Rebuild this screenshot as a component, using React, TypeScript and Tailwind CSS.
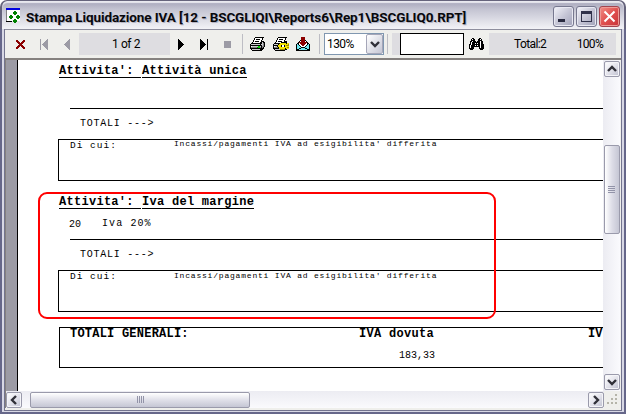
import React from "react";

const PALETTE: Record<string, string> = {
  k: "#000000", g: "#808080", l: "#c8c8cc", w: "#ffffff", r: "#8b0000",
  G: "#00d000", d: "#008000", y: "#f4e400", o: "#a08c00", c: "#70e8f0", b: "#0000e0", a: "#9c9ba5",
};

/* Bitmap glyph: every character of a row is one pixel. */
function Bitmap({ rows, className = "" }: { rows: string[]; className?: string }) {
  const w = Math.max(...rows.map((r) => r.length));
  return (
    <svg width={w} height={rows.length} viewBox={`0 0 ${w} ${rows.length}`} shapeRendering="crispEdges" className={`block shrink-0 ${className}`}>
      {rows.flatMap((r, y) =>
        r.split("").map((ch, x) => (PALETTE[ch] ? <rect key={`${x}-${y}`} x={x} y={y} width={1} height={1} fill={PALETTE[ch]} /> : null))
      )}
    </svg>
  );
}

const APP = [
  "bbbbbbbbbbbbbb.",
  "bbbbbbbbbbbbbb.",
  "gwwwwwwwwwwwww.",
  "gwwwwwwwddwwww.",
  "gwwwwwwddddwww.",
  "gwwwwwwddddwww.",
  "gwwwwwwwddwwww.",
  "gwwwddwwwwwddw.",
  "gwwddddwwwdddd.",
  "gwwddddwwwdddd.",
  "gwwwddwwwwwddw.",
  "gwwwwwwwddwwww.",
  "gwwwwwwddddwww.",
  "kkkkkk.dddd....",
  "........dd.....",
];
const CLOSE = ["rr.....rr", "rrr...rrr", ".rrr.rrr.", "..rrrrr..", "...rrr...", "..rrrrr..", ".rrr.rrr.", "rrr...rrr", "rr.....rr"];
const FIRST = ["a......a", "a.....aa", "a....aaa", "a...aaaa", "a..aaaaa", "a.aaaaaa", "a..aaaaa", "a...aaaa", "a....aaa", "a.....aa", "a......a"];
const PREV = [".....a", "....aa", "...aaa", "..aaaa", ".aaaaa", "aaaaaa", ".aaaaa", "..aaaa", "...aaa", "....aa", ".....a"];
const NEXT = ["k.....", "kk....", "kkk...", "kkkk..", "kkkkk.", "kkkkkk", "kkkkk.", "kkkk..", "kkk...", "kk....", "k....."];
const LAST = ["k......k", "kk.....k", "kkk....k", "kkkk...k", "kkkkk..k", "kkkkkk.k", "kkkkk..k", "kkkk...k", "kkk....k", "kk.....k", "k......k"];
const PRINT = [
  ".....kkkkkkkkk.", "....kwwwwwwwk..", "....kwkkkkwwk..", "...kwwwwwwwk...", "...kwkkkkwwkkk.", "..kwwwwwwwkklkk",
  ".kkkkkkkkkkklgk", "klllllllllkllgk", "kkkkkkkkkkkklgk", "kwllllllGGlkggk", "kggggggdGGgkgk.", "kkkkkkkkkkkkkk.", ".kllllllllkkk..", "..kkkkkkkkkk...",
];
const PRINT_SETUP = [
  ".....kkkkkkkkk..", "....kwwwwwwwk...", "....kwkkkkwwk...", "...kwwwwwwwk....", "...kwkkkkwwkkk..", "..kwwwwwkkkkkk..",
  ".kkkkkkyyyyyykyy", "kllllkyyyyyyyyyo", "kkkkkyyykwwkyooo", "kwllkyyykwwkyyyy", "kggggkyyyyyyyyoo", "kkkkkkyyyyyykyyy", ".kllllloooookk..", "..kkkkkkkkkk....",
];
const EXPORT = [
  ".....rrrr.....", ".....rrrr.....", ".....rrrr.....", "....krrrrk....", "...kwrrrrwk...", "..krrrrrrrrk..", ".kkwrrrrrrwkk.",
  "kckwwrrrrwwkck", "kcckwwrrwwkcck", "kccckwwwwkccck", "kcccckkkkcccck", "kcckkcccckkcck", "kkkcccccccckkk", "kkkkkkkkkkkkkk",
];
const BINOCULARS = [
  "...kk.....kk...", "..kwkk...kkwk..", "..kkkk...kkkk..", ".kkwkkk.kkkwkk.", ".kwkkkkkkkkwkk.", ".kwkkkwkwkkwkk.",
  "kkwkkkkkkkkwkkk", "kwkkkkwkwkkwkkk", "kwkkkkkkkkkwkkk", "kwkkk.....kwkkk", "kkkkk.....kkkkk", ".kkk.......kkk.",
];

function Chevron({ turn }: { turn: string }) {
  return (
    <svg width="10" height="10" viewBox="0 0 10 10" className={`block shrink-0 ${turn}`}>
      <path d="M1 3 5 7 9 3" fill="none" stroke="#303038" strokeWidth="2.4" />
    </svg>
  );
}

function ScrollButton({ turn }: { turn: string }) {
  return (
    <div className="flex h-4 w-4 shrink-0 items-center justify-center rounded-[2px] border border-[#9a9aab] bg-gradient-to-br from-white via-[#e4e4ec] to-[#bfc0d0] shadow-[inset_0_0_0_1px_#f4f4f8]">
      <Chevron turn={turn} />
    </div>
  );
}

const Sep = ({ className }: { className: string }) => <div className={`h-5 w-px shrink-0 bg-[#bdbdc4] ${className}`} />;

function TitleBar() {
  const btn = "flex h-[21px] w-[21px] shrink-0 rounded-[3px] border";
  const grey = "border-[#77788f] bg-gradient-to-br from-[#f4f4fa] via-[#c6c6d6] to-[#a0a1b8] shadow-[inset_0_0_0_1px_#e8e8f2]";
  return (
    <header className="flex h-[29px] shrink-0 items-start rounded-t-[7px] border-x-2 border-t border-[#66647c] bg-gradient-to-b from-[#a5a4b9] via-[#c4c4d2] via-30% to-[#f3f3f7] pl-1 shadow-[inset_0_2px_1px_#e8e8ef]">
      <Bitmap rows={APP} className="mt-[7px]" />
      <h1 className="ml-[5px] mt-[7px] w-[527px] whitespace-nowrap font-['Roboto'] text-[13.5px] font-bold leading-[18px] tracking-[-0.1px] text-[#08080c] [text-shadow:1px_1px_0_#b4b4c4]">
        Stampa Liquidazione IVA [12 - BSCGLIQI\Reports6\Rep1\BSCGLIQ0.RPT]
      </h1>
      <div className="mt-[5px] flex gap-[2px]">
        <div className={`${btn} ${grey} items-end pb-1 pl-1`}><i className="h-[3px] w-[7px] bg-[#292a40]" /></div>
        <div className={`${btn} ${grey} items-center justify-center`}><i className="h-[11px] w-[11px] border border-t-[3px] border-[#30314a]" /></div>
        <div className={`${btn} items-center justify-center border-[#a34450] bg-gradient-to-br from-[#f08c86] via-[#e05050] to-[#c83038] shadow-[inset_0_0_0_1px_#ed9a96]`}>
          <svg width="13" height="13" viewBox="0 0 13 13" className="shrink-0"><path d="M1.5 1.5l10 10M11.5 1.5l-10 10" stroke="#fff" strokeWidth="2" /></svg>
        </div>
      </div>
    </header>
  );
}

function Toolbar() {
  return (
    <div className="flex h-[29px] shrink-0 items-center border-t border-[#8e8e9e] bg-[#efefec] pl-[11px] font-['Roboto'] text-[12px] tracking-[-0.2px] text-black">
      <Bitmap rows={CLOSE} />
      <Bitmap rows={FIRST} className="ml-[15px]" />
      <Bitmap rows={PREV} className="ml-4" />
      <div className="ml-[9px] flex h-[22px] w-[91px] shrink-0 items-center justify-center bg-[#dedde1] pl-[3px] tracking-[-0.4px]">1 of 2</div>
      <Bitmap rows={NEXT} className="ml-2" />
      <Bitmap rows={LAST} className="ml-4" />
      <div className="ml-4 h-[7px] w-[7px] shrink-0 bg-[#9c9ba5]" />
      <Sep className="ml-[11px]" />
      <Bitmap rows={PRINT} className="ml-[7px]" />
      <Bitmap rows={PRINT_SETUP} className="ml-2" />
      <Bitmap rows={EXPORT} className="ml-[7px]" />
      <Sep className="ml-[9px]" />
      <div className="ml-1 flex h-[22px] w-[60px] shrink-0 items-center justify-between border border-[#8097b0] bg-white pl-[2px]">
        <span className="tracking-[-0.6px]">130%</span>
        <div className="flex h-5 w-[17px] items-center justify-center rounded-[2px] border border-[#a5a6b8] bg-gradient-to-br from-white to-[#c5c6d4]"><Chevron turn="" /></div>
      </div>
      <Sep className="ml-[3px]" />
      <div className="ml-1 h-[22px] w-2 shrink-0 bg-[#dedde1]" />
      <div className="h-[22px] w-16 shrink-0 border border-black bg-white" />
      <Bitmap rows={BINOCULARS} className="ml-[5px]" />
      <div className="ml-[5px] flex h-[22px] w-[127px] shrink-0 items-center justify-between bg-[#dedde1] pl-[25px] pr-[13px]">
        <span className="tracking-[-0.6px]">Total:2</span>
        <span className="tracking-[-0.7px]">100%</span>
      </div>
    </div>
  );
}

function Heading({ name }: { name: string }) {
  return (
    <h2 className="ml-[41px] flex h-[14px] gap-px text-[12px] font-bold leading-[15px] tracking-[0.28px]">
      <span className="w-[82px] border-b border-black">Attivita':</span>
      <span className="border-b border-black">{name}</span>
    </h2>
  );
}

function Totals() {
  return (
    <div className="ml-[52px] h-[31px] border-t border-black pl-[10px] pt-[9px] text-[10px] leading-[12px] tracking-[0.75px]">
      {"TOTALI --->"}
    </div>
  );
}

function Detail({ first = false }: { first?: boolean }) {
  return (
    <div className="ml-10 flex h-[42px] border-y border-l border-black pl-[11px]">
      <span className="w-[104px] text-[9.5px] leading-[11px] tracking-[1px]">Di cui:</span>
      <span className={`h-[10px] overflow-hidden text-[8px] tracking-[0.8px] ${first ? "leading-[7px]" : "leading-[9px]"}`}>Incassi/pagamenti IVA ad esigibilita' differita</span>
    </div>
  );
}

function Report() {
  return (
    <main className="relative h-[331px] w-[586px] shrink-0 overflow-hidden whitespace-nowrap border-l border-black bg-white pt-1 font-['Liberation_Mono',monospace] text-black">
      <Heading name="Attività unica" />
      <div className="h-[30px]" />
      <Totals />
      <Detail first />
      <div className="h-[14px]" />
      <Heading name="Iva del margine" />
      <div className="ml-[51px] flex h-[30px] pt-[9px] text-[10px] leading-[12px]">
        <span className="w-[33px] pt-px">20</span>
        <span className="tracking-[1.1px]">Iva 20%</span>
      </div>
      <Totals />
      <Detail />
      <div className="ml-[41px] mt-[15px] h-[41px] border-y border-l border-black pl-[10px]">
        <div className="flex h-[22px] text-[12px] font-bold leading-[12px] tracking-[0.22px]">
          <span className="w-[289px] shrink-0">TOTALI GENERALI:</span>
          <span className="w-[229px] shrink-0 tracking-[0.3px]">IVA dovuta</span>
          <span className="tracking-normal">IV</span>
        </div>
        <div className="ml-[329px] text-[10px] leading-[12px]">183,33</div>
      </div>
      <div className="absolute left-5 top-[132px] h-[127px] w-[458px] rounded-[9px] border-2 border-[#ff0000]" />
    </main>
  );
}

export default function App() {
  return (
    <div className="flex h-[414px] w-[626px] flex-col overflow-hidden bg-white">
      <TitleBar />
      <div className="flex h-[385px] flex-col border-b-2 border-l-2 border-r-2 border-[#66678a]">
        <div className="flex h-[383px] flex-col border-x-2 border-b border-[#d8d8e5] bg-[#efefec]">
          <div className="flex h-[382px] w-[618px] flex-col border-b border-l border-r border-[#73748f] bg-[#efefec]">
            <Toolbar />
            <div className="flex h-[350px] flex-col border-l border-t-2 border-[#85817f]">
              <div className="flex h-[331px]">
                <div className="w-[11px] shrink-0 bg-[#9c9ba5]" />
                <Report />
                <div className="flex w-[17px] flex-col items-center bg-gradient-to-r from-[#ececf2] to-[#fafafd] pt-px">
                  <ScrollButton turn="rotate-180" />
                  <div className="mt-[68px] flex h-[89px] w-4 flex-col items-center justify-center gap-px rounded-[2px] border border-[#9a9aab] bg-gradient-to-r from-white via-[#dddde7] to-[#c5c6d4]">
                    <i className="h-px w-[7px] bg-[#9293a8]" /><i className="h-px w-[7px] bg-[#9293a8]" /><i className="h-px w-[7px] bg-[#9293a8]" /><i className="h-px w-[7px] bg-[#9293a8]" />
                  </div>
                  <div className="mt-auto pb-px"><ScrollButton turn="" /></div>
                </div>
              </div>
              <div className="flex h-[17px] items-center bg-gradient-to-b from-[#ececf2] to-[#fafafd]">
                <ScrollButton turn="rotate-90" />
                <div className="ml-2 flex h-4 w-[220px] items-center justify-center gap-px rounded-[2px] border border-[#9a9aab] bg-gradient-to-b from-white via-[#e0e0e9] to-[#c5c6d4]">
                  <i className="h-[7px] w-px bg-[#9293a8]" /><i className="h-[7px] w-px bg-[#9293a8]" /><i className="h-[7px] w-px bg-[#9293a8]" /><i className="h-[7px] w-px bg-[#9293a8]" />
                </div>
                <div className="ml-auto"><ScrollButton turn="-rotate-90" /></div>
                <div className="flex h-[17px] w-[17px] items-end justify-end bg-[#efefec] p-[3px]">
                  <svg width="11" height="11" fill="#b5b4a9"><path d="M8 0h2v2h-2zM4 4h2v2h-2zM8 4h2v2h-2zM0 8h2v2h-2zM4 8h2v2h-2zM8 8h2v2h-2z" /></svg>
                </div>
              </div>
            </div>
          </div>
        </div>
      </div>
    </div>
  );
}
